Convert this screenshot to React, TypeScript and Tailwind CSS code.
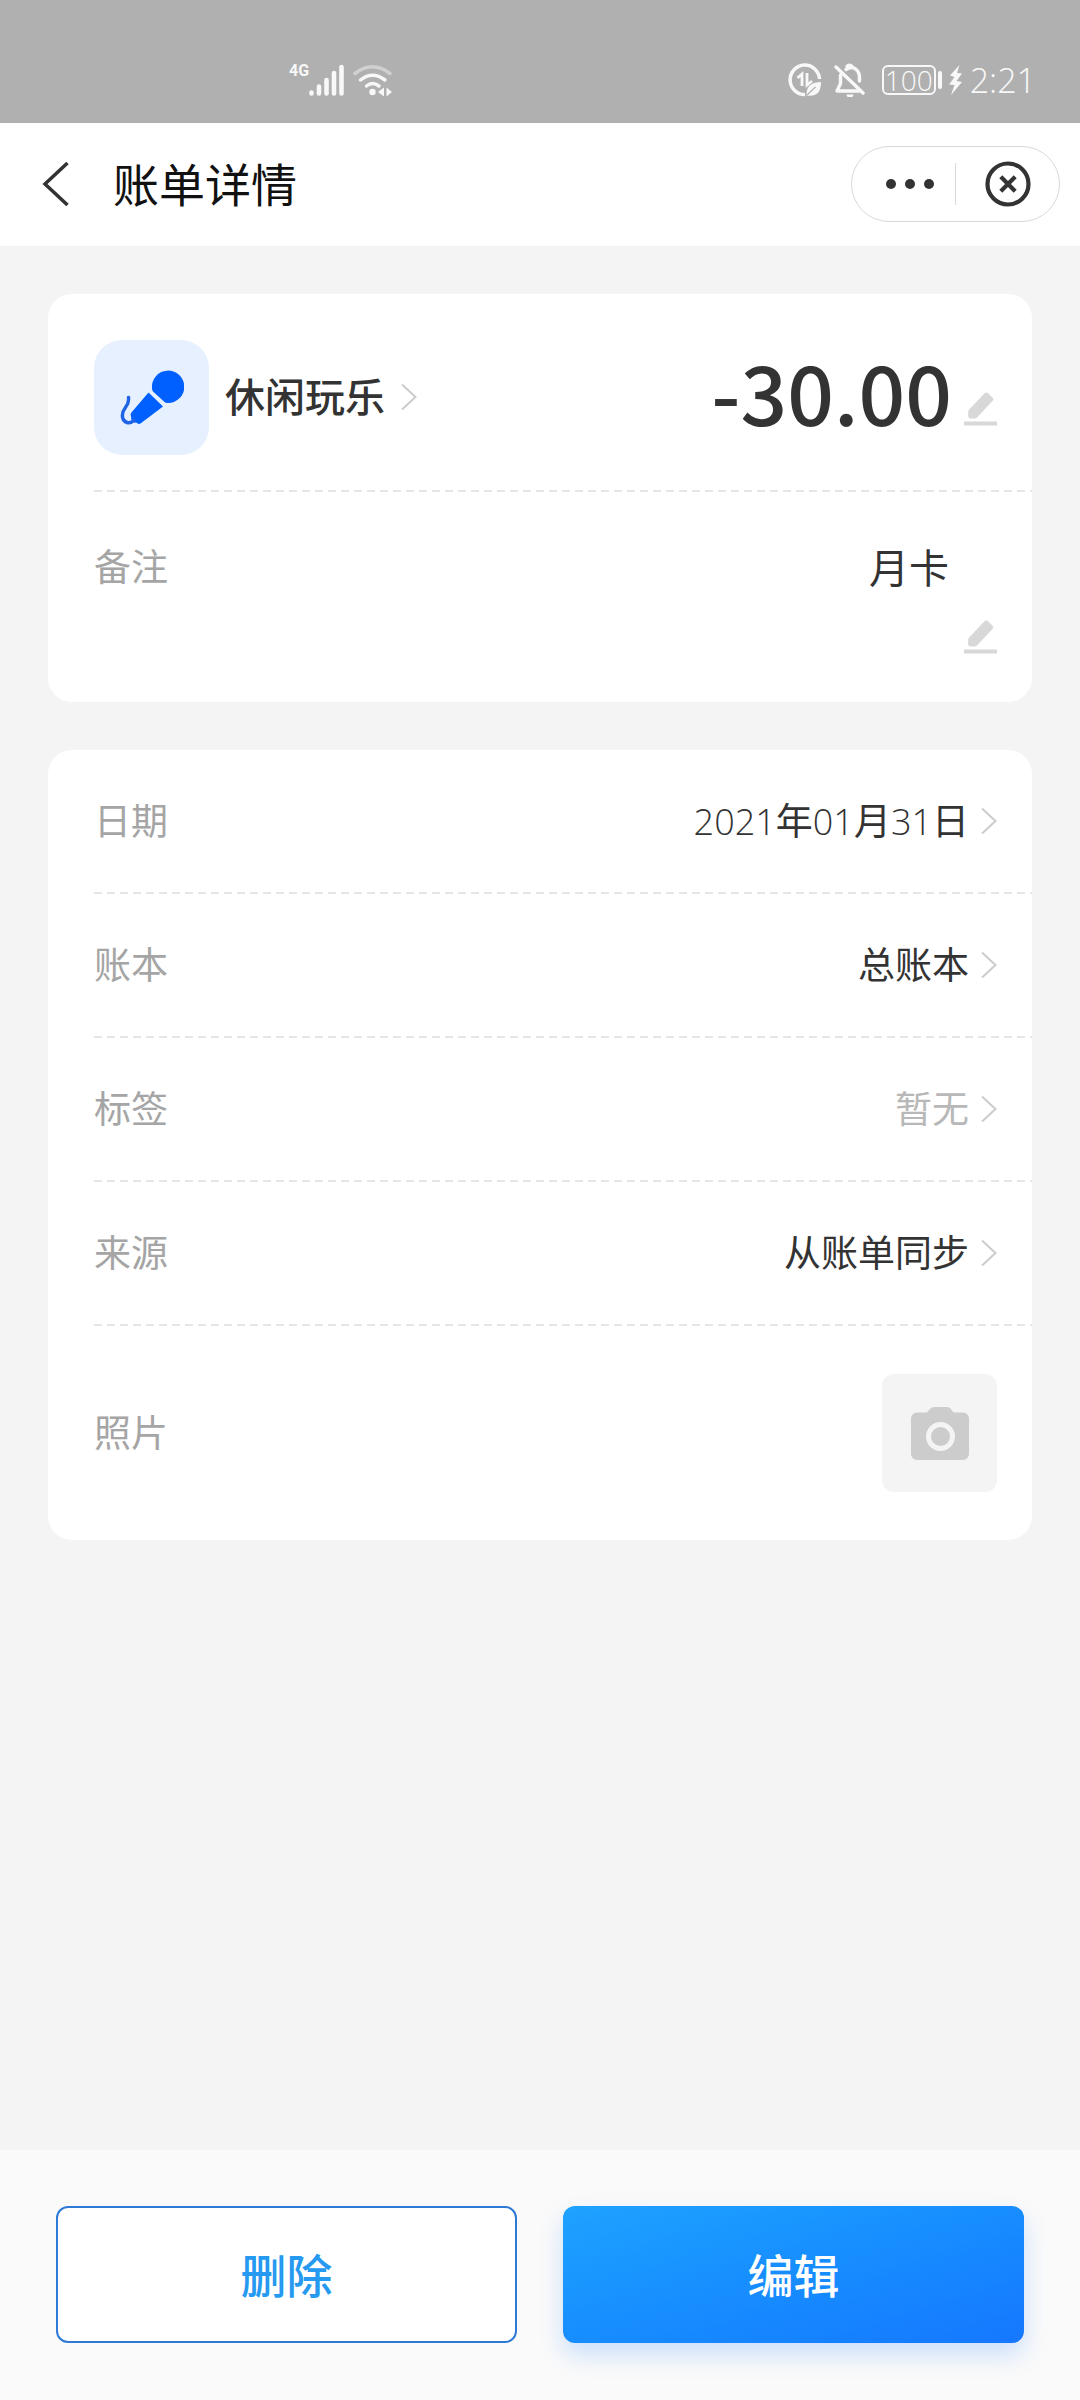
import type { ReactNode } from 'react';

type DetailRow = {
  label: string;
  value: string;
  muted?: boolean;
};

const rows: DetailRow[] = [
  { label: '日期', value: '2021年01月31日' },
  { label: '账本', value: '总账本' },
  { label: '标签', value: '暂无', muted: true },
  { label: '来源', value: '从账单同步' },
];

const ChevronRight = () => (
  <svg className="h-7 w-4 shrink-0" viewBox="0 0 16 28" fill="none" aria-hidden="true">
    <path d="M1 1.5L14.5 14L1 26.5" stroke="#cccccc" strokeWidth={2} />
  </svg>
);

const EditIcon = () => (
  <svg className="h-[34px] w-[33px]" viewBox="0 0 33 34" fill="#d8d8d8" aria-hidden="true">
    <path d="M20.5 1.3a2.6 2.6 0 0 1 3.6 0l4.4 4.4a2.4 2.4 0 0 1 0 3.4L13 25.6a3.5 3.5 0 0 1-2.4 1H6.5A2.3 2.3 0 0 1 4.2 24.3v-4.5a3.5 3.5 0 0 1 1-2.4z" />
    <path d="M0 29.5h33v4H0z" />
  </svg>
);

const Divider = () => (
  <div className="h-0.5 bg-[repeating-linear-gradient(90deg,#e6e6e6_0_8px,transparent_8px_13px)]" />
);

const Card = ({ children }: { children: ReactNode }) => (
  <section className="rounded-3xl bg-white pl-[46px]">{children}</section>
);

const StatusBar = () => (
  <div className="flex h-[123px] items-end justify-between bg-[#b0b0b0] pr-11 pb-6 pl-[289px] text-[#f8f8f8]">
    <div className="flex h-[38px] items-start">
      <span className="font-[Roboto,sans-serif] text-base leading-5 font-bold">4G</span>
      {/* 信号强度 */}
      <svg className="mt-0.5 h-[34px] w-9" viewBox="0 0 36 34" stroke="currentColor" strokeWidth={4.6} strokeLinecap="round" aria-hidden="true">
        <path d="M2.5 29.5v1M10 23.5v7M17.5 17v13.5M25 10v20.5M32.5 4v26.5" />
      </svg>
      {/* Wi-Fi */}
      <svg className="mt-0.5 ml-2 h-[34px] w-10" viewBox="0 0 40 34" fill="none" stroke="currentColor" strokeWidth={3.5} strokeLinecap="round" aria-hidden="true">
        <path d="M2 10.5Q19.5-3 37 10.5" stroke="#d0d0d0" />
        <path d="M7.5 17Q19.5 7.5 32 17M13.5 23Q19.5 18 26 23" />
        <circle cx="19.5" cy="29" r="3.2" fill="currentColor" stroke="none" />
        <path d="M25 29l6-4.5v9zM33.5 24.5l5.5 4.5-5.5 4.5z" fill="currentColor" stroke="none" />
      </svg>
    </div>
    <div className="flex h-[38px] items-center">
      {/* 省流量 */}
      <svg className="h-[34px] w-[34px]" viewBox="0 0 34 34" fill="none" stroke="currentColor" aria-hidden="true">
        <path d="M31.5 16A14.7 14.7 0 1 0 17 31.5" strokeWidth={3.5} />
        <path d="M9.500 15l4.500-4v12M19 10v12l5-4" strokeWidth={2.8} />
        <path d="M33 19c-9 0-15 4-14.5 13.5C29 34 33 29 33 19z" fill="currentColor" stroke="none" />
        <path d="M19 32l8.5-8" stroke="#b0b0b0" strokeWidth={1.2} />
      </svg>
      {/* 静音 */}
      <svg className="ml-3 h-[34px] w-8" viewBox="0 0 32 34" fill="none" stroke="currentColor" strokeWidth={3.4} strokeLinecap="round" strokeLinejoin="round" aria-hidden="true">
        <path d="M2 4l27 26" />
        <path d="M12 6.5C20 1 26 8 25.5 16v2" />
        <path d="M6.5 12v8.500L3 28h22" />
        <path d="M13 3.5a3 3 0 0 1 5 0" />
        <path d="M12.5 31.5h7a3.500 3 0 0 1-7 0z" fill="currentColor" stroke="none" />
      </svg>
      <span className="ml-4 flex h-[30px] w-[54px] items-center justify-center rounded-md border-2 border-current font-['Open_Sans',sans-serif] text-[28px] leading-7 font-light">
        100
      </span>
      <span className="ml-0.5 h-[18px] w-1 rounded-sm bg-current" />
      <svg className="ml-1.5 h-8 w-3.5" viewBox="0 0 14 32" fill="currentColor" aria-hidden="true">
        <path d="M11.5 1L2 11.500l4.500 1.500L1 20.500l5.500.5L3 31l11-13-5.500-1 5.500-7.500-5-.500z" />
      </svg>
      <span className="ml-2 font-['Open_Sans',sans-serif] text-[34px] leading-9 font-light">2:21</span>
    </div>
  </div>
);

const Header = () => (
  <header className="flex h-[123px] items-center justify-between bg-white pr-5 pb-0.5 pl-[42px]">
    <div className="flex items-center">
      <button type="button" aria-label="返回">
        <svg className="h-11 w-[27px]" viewBox="0 0 27 44" fill="none" aria-hidden="true">
          <path d="M25.5 1L3 22L25.5 43" stroke="#333333" strokeWidth={3.5} />
        </svg>
      </button>
      <h1 className="ml-11 text-[46px] leading-[60px] text-[#111111]">账单详情</h1>
    </div>
    <div className="flex h-[76px] w-[209px] items-center rounded-full border border-[#d9d9d9]">
      <button type="button" aria-label="更多" className="flex w-[103px] items-center justify-center gap-[9px] pl-3">
        <span className="size-2.5 rounded-full bg-[#333333]" />
        <span className="size-2.5 rounded-full bg-[#333333]" />
        <span className="size-2.5 rounded-full bg-[#333333]" />
      </button>
      <span className="h-[42px] w-px bg-[#d9d9d9]" />
      <button type="button" aria-label="关闭" className="flex flex-1 items-center justify-center">
        <svg className="size-[46px]" viewBox="0 0 46 46" fill="none" stroke="#333333" aria-hidden="true">
          <circle cx="23" cy="23" r="20.5" strokeWidth={4.2} />
          <path d="M15.8 15.8l14.4 14.4M30.2 15.8L15.8 30.2" strokeWidth={4.2} />
        </svg>
      </button>
    </div>
  </header>
);

const App = () => {
  return (
    <div className="flex min-h-screen flex-col bg-[#f4f4f4] font-['Open_Sans','Noto_Sans_CJK_SC',sans-serif] text-[#333333]">
      <StatusBar />
      <Header />

      <main className="flex flex-1 flex-col gap-12 px-12 pt-12">
        <Card>
          <div className="flex h-[196px] items-center justify-between pt-2.5 pr-[35px]">
            <button type="button" className="flex items-center">
              <span className="flex size-[115px] items-center justify-center rounded-[28px] bg-[#e6f0ff]">
                {/* 麦克风 */}
                <svg className="h-14 w-16" viewBox="0 0 64 56" fill="#0060ff" aria-hidden="true">
                  <path d="M32 19.5A16.2 16.2 0 1 1 48 34q-2 .3-3.5-1L33 22.5q-1-1.3-1-3z" />
                  <path d="M28.5 23.5L43 37.5L20.5 54.5q-1.5.8-3 0l-1.2-1-1.8.2L11 50l.2-1.6q-1.200-2-.2-4.4z" />
                  <path d="M8.5 28.5c1.5 10-7.5 10-6 19.5 1 6 7 7.5 11.5 3.5" fill="none" stroke="#1f63e6" strokeWidth={3.4} strokeLinecap="round" />
                </svg>
              </span>
              <span className="mr-4 ml-4 text-[40px] leading-[60px] font-medium">休闲玩乐</span>
              <ChevronRight />
            </button>
            <div className="flex items-center">
              <strong className="pb-3 font-['Noto_Sans_CJK_SC',sans-serif] text-[82px] leading-[100px] font-medium">
                -30.00
              </strong>
              <button type="button" aria-label="编辑金额" className="ml-3 pt-6">
                <EditIcon />
              </button>
            </div>
          </div>
          <Divider />
          <div className="flex justify-between pt-12 pr-[35px] pb-12">
            <span className="text-[37px] leading-[54px] text-[#a5a5a5]">备注</span>
            <div className="flex flex-col items-end">
              <span className="pr-12 text-[40px] leading-[56px]">月卡</span>
              <button type="button" aria-label="编辑备注" className="mt-6">
                <EditIcon />
              </button>
            </div>
          </div>
        </Card>

        <Card>
          {rows.map((row) => (
            <div key={row.label}>
              <div className="flex h-[142px] items-center justify-between pr-[35px] text-[37px] leading-[54px]">
                <span className="text-[#a5a5a5]">{row.label}</span>
                <button
                  type="button"
                  className={row.muted ? 'flex items-center gap-3 text-[#b8b8b8]' : 'flex items-center gap-3'}
                >
                  <span>
                    {/* 数字用细体 */}
                    {row.value.split(/(\d+)/).map((part, i) =>
                      /\d/.test(part) ? (
                        <span key={i} className="text-[36px] font-light">
                          {part}
                        </span>
                      ) : (
                        part
                      ),
                    )}
                  </span>
                  <ChevronRight />
                </button>
              </div>
              <Divider />
            </div>
          ))}
          <div className="flex h-[214px] items-center justify-between pr-[35px]">
            <span className="text-[37px] leading-[54px] text-[#a5a5a5]">照片</span>
            <button
              type="button"
              aria-label="添加照片"
              className="flex h-[118px] w-[115px] items-center justify-center rounded-xl bg-[#f4f4f4]"
            >
              <svg className="h-[53px] w-[58px]" viewBox="0 0 58 53" aria-hidden="true">
                <path
                  d="M6 5.5h10L19.5 1.5Q21 0 23 0h13q2 0 3.5 1.5L42.5 5.5H52a6 6 0 0 1 6 6V47a6 6 0 0 1-6 6H6a6 6 0 0 1-6-6V11.5a6 6 0 0 1 6-6z"
                  fill="#cccccc"
                />
                <circle cx="29.5" cy="29.5" r="12" fill="#cccccc" stroke="#f4f4f4" strokeWidth={5} />
              </svg>
            </button>
          </div>
        </Card>
      </main>

      <footer className="grid grid-cols-2 gap-[46px] bg-[#fafafa] px-14 pt-14 pb-[57px] text-[46px] leading-[60px] font-medium">
        <button type="button" className="h-[137px] rounded-xl border-2 border-[#2f7ad6] bg-white text-[#2699f0]">
          删除
        </button>
        <button
          type="button"
          className="h-[137px] rounded-xl bg-linear-to-br from-[#1fa2ff] to-[#1677ff] text-white shadow-[0_12px_24px_rgba(22,119,255,0.2)]"
        >
          编辑
        </button>
      </footer>
    </div>
  );
};

export default App;
